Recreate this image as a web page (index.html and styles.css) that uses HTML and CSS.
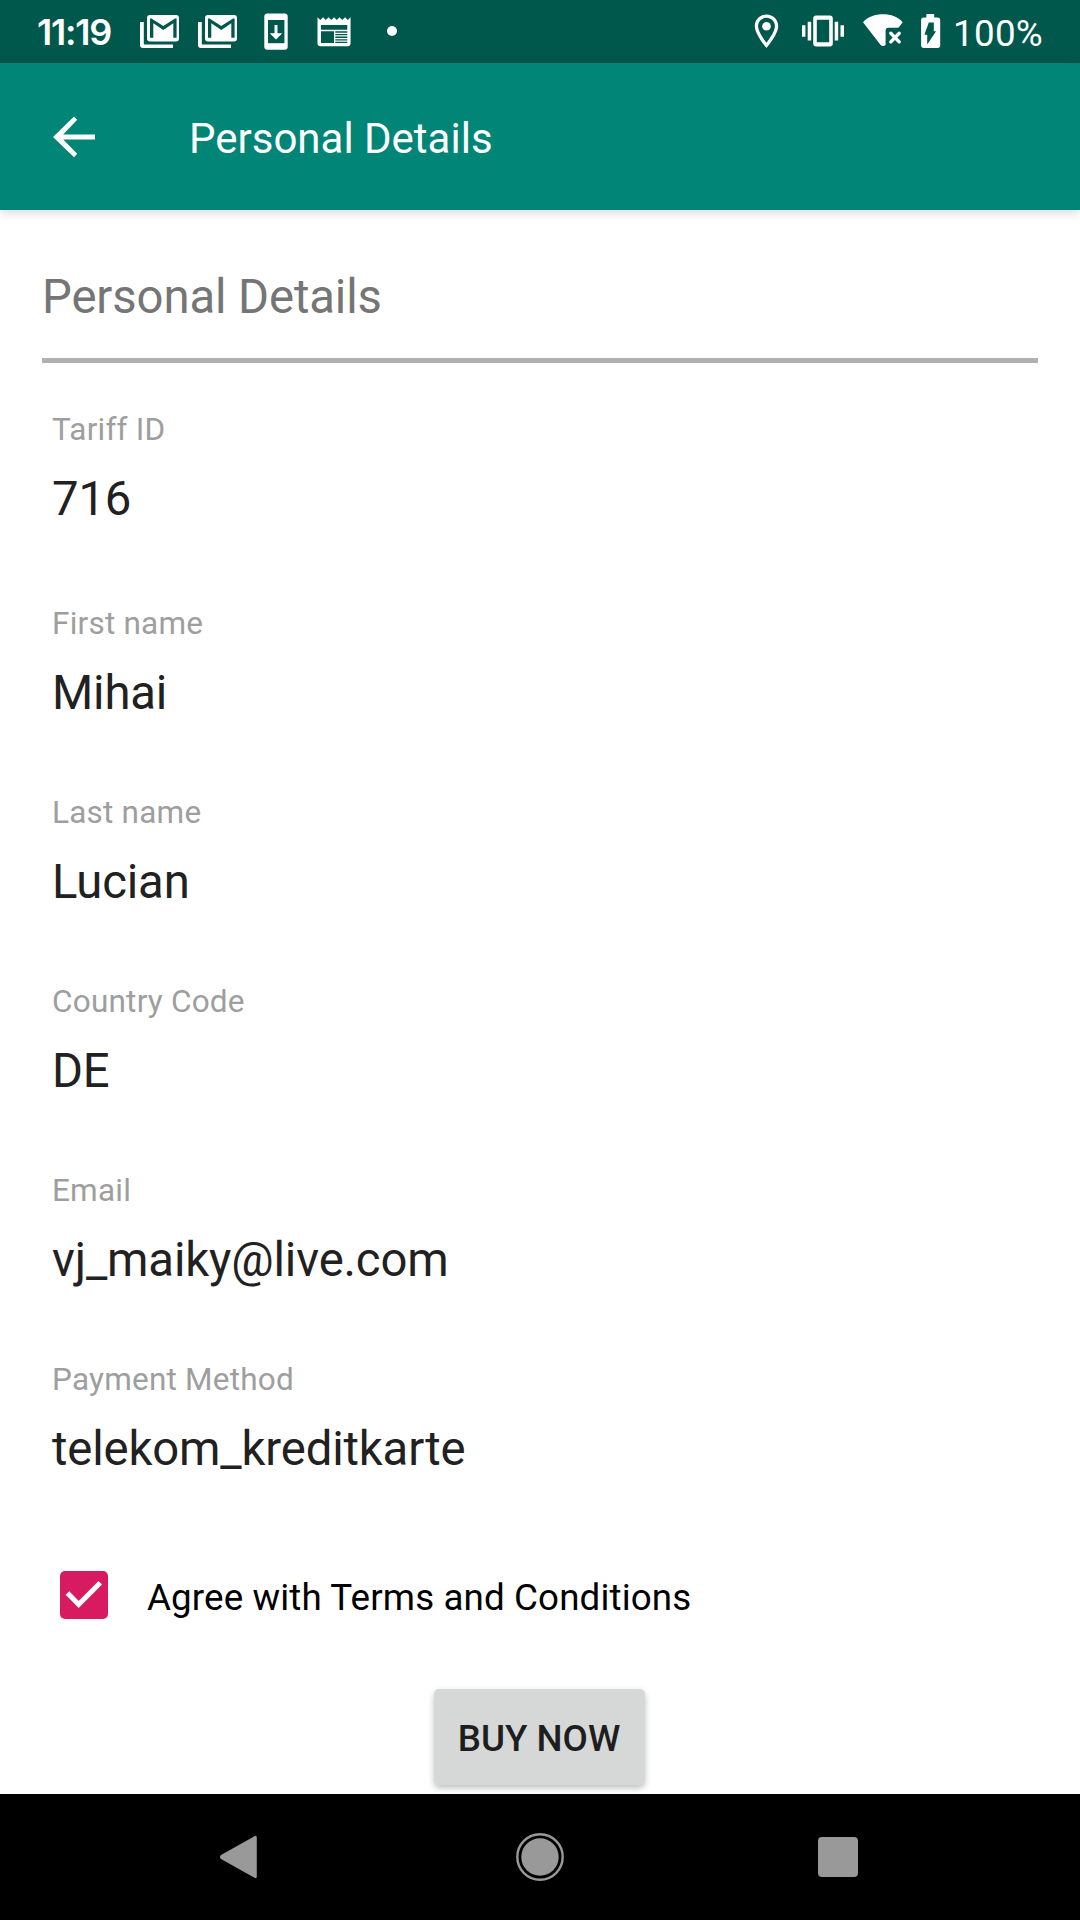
FILE: index.html
```html
<!DOCTYPE html>
<html lang="en">
<head>
<meta charset="utf-8">
<title>Personal Details</title>
<link rel="stylesheet" href="styles.css">
</head>
<body>
<div class="screen">
  <div class="status-bar">
    <span class="clock">11:19</span>
    <div class="notifications">
      <svg class="slot" viewBox="0 0 58 63"><path class="ink" d="M9 22h3.8v22.4h29.2V48H12q-3 0-3-3z"/><rect class="ink" x="16" y="15" width="32" height="26.6" rx="3"/><path class="cut" d="M19 37.7V18.5h1.5L32.3 26 44.1 18.5h1.5v19.2h-3.3V23.3l-10 6.7-10-6.7v14.4z"/></svg>
      <svg class="slot" viewBox="0 0 58 63"><path class="ink" d="M9 22h3.8v22.4h29.2V48H12q-3 0-3-3z"/><rect class="ink" x="16" y="15" width="32" height="26.6" rx="3"/><path class="cut" d="M19 37.7V18.5h1.5L32.3 26 44.1 18.5h1.5v19.2h-3.3V23.3l-10 6.7-10-6.7v14.4z"/></svg>
      <svg class="slot" viewBox="0 0 58 63"><rect class="ink" x="17.3" y="13.5" width="23.4" height="36.2" rx="3"/><path class="cut" d="M21 20h16.4v23.2H21z"/><path class="ink" d="M27.5 25h3v8.3h4.8L29 39.5l-6.300-6.200h4.800z"/></svg>
      <svg class="slot" viewBox="0 0 58 63"><path class="ink" d="M12.500 17.300l2.800 2.600 2.750-2.600 2.750 2.600 2.750-2.600 2.750 2.600 2.750-2.600 2.750 2.600 2.750-2.600 2.750 2.600 2.750-2.600 2.750 2.600 2.750-2.600V43.300q0 3-3 3H15.500q-3 0-3-3z"/><path class="cut" d="M16 25h26.300v4.800H16zM16 31.300h13v11.700H16zM30.300 31.300h12v1.400h-12zM30.300 34h12v1.300h-12zM30.300 36.600h12v1.300h-12zM30.300 39.200h12v1.300h-12zM30.300 41.800h12v1.200h-12z"/></svg>
      <svg class="slot" viewBox="0 0 58 63"><circle class="ink" cx="29" cy="31" r="5"/></svg>
    </div>
    <div class="system">
      <svg class="location" viewBox="744 0 46 63"><path class="ink" fill-rule="evenodd" d="M766.500 14.500c-6.500 0-11.700 5.100-11.700 11.600 0 8.700 11.700 21.900 11.700 21.900s11.700-13.200 11.700-21.900c0-6.500-5.200-11.600-11.700-11.600zm0 3.300c4.700 0 8.400 3.700 8.400 8.300 0 4.900-4.800 12-8.400 16.600-3.600-4.600-8.400-11.700-8.400-16.600 0-4.600 3.700-8.300 8.400-8.300z"/><circle class="ink" cx="766.500" cy="26.200" r="4.300"/></svg>
      <svg class="vibrate" viewBox="790 0 66 63"><path class="ink" d="M802 25.200h3.400v11.600H802zM807.700 21.700h3.500v18.700h-3.500zM834.700 21.700h3.500v18.700h-3.500zM840.500 25.200h3.500v11.600h-3.500z"/><path class="ink" fill-rule="evenodd" d="M816.200 15.500h13.600q3 0 3 3v25q0 3-3 3h-13.600q-3 0-3-3v-25q0-3 3-3zm.6 4.300v22.400h12.400V19.800z"/></svg>
      <svg class="wifi" viewBox="856 0 54 63"><path class="ink" d="M863 22.200C868 16.700 875 14.300 883 14.300s15 2.600 19.700 7.900l-3.400 4.500q-.7 1-2 1h-8.700q-3 0-3 3v14.400q-3 2.200-5.200-.4z"/><path class="mark" d="M890.800 33.200l8.400 8.700m0-8.700l-8.400 8.700"/></svg>
      <svg class="battery" viewBox="910 0 40 63"><path class="ink" d="M926.400 14h7.800v3.500h3.300q2.700 0 2.700 2.700v25q0 2.700-2.700 2.700h-13.700q-2.700 0-2.700-2.700v-25q0-2.700 2.700-2.700h2.600z"/><path class="cut" d="M933.800 22.500v8.800h2.300L927.200 44.500v-9.800h-2.800l4.400-12.200z"/></svg>
      <span class="level">100%</span>
    </div>
  </div>

  <header class="app-bar">
    <svg class="back" viewBox="0 0 42 42"><path d="M42 18.600v5H10.200l14 14.200L21 41.300 0 21 21 .6l3.200 3.200-14 14.800z"/></svg>
    <h1 class="title">Personal Details</h1>
  </header>

  <main class="content">
    <h2 class="section">Personal Details</h2>
    <dl class="fields">
      <div class="field field-lead"><dt>Tariff ID</dt><dd>716</dd></div>
      <div class="field"><dt>First name</dt><dd>Mihai</dd></div>
      <div class="field"><dt>Last name</dt><dd>Lucian</dd></div>
      <div class="field"><dt>Country Code</dt><dd>DE</dd></div>
      <div class="field"><dt>Email</dt><dd>vj_maiky@live.com</dd></div>
      <div class="field"><dt>Payment Method</dt><dd>telekom_kreditkarte</dd></div>
    </dl>
    <div class="agree">
      <svg class="check" viewBox="0 0 48 48"><rect class="box" width="48" height="48" rx="5"/><path class="tick" d="M7.500 22L18.700 33.500 40.300 11.800"/></svg>
      <span class="agree-text">Agree with Terms and Conditions</span>
    </div>
    <button class="buy">BUY NOW</button>
  </main>

  <nav class="nav-bar">
    <svg class="key" viewBox="0 0 52 52"><path d="M35.500 5.200q2.300-1.200 2.300 1.600v38.400q0 2.800-2.300 1.600L2 28q-2-2 0-4z"/></svg>
    <svg class="key" viewBox="0 0 52 52"><circle class="ring" cx="26" cy="26" r="22.700"/><circle cx="26" cy="26" r="18.700"/></svg>
    <svg class="key" viewBox="0 0 52 52"><rect x="8" y="6" width="40" height="40" rx="4"/></svg>
  </nav>
</div>
</body>
</html>
```
FILE: styles.css
```css
* { box-sizing: border-box; }

body {
  margin: 0;
  font-family: Roboto, "Noto Sans", sans-serif;
  background: #fff;
}

h1, h2, dl, dt, dd { margin: 0; font-weight: 400; }
svg { display: block; flex: none; }

.screen {
  display: flex;
  flex-direction: column;
  width: 1080px;
  height: 1920px;
  overflow: hidden;
}

.status-bar {
  display: flex;
  flex: none;
  height: 63px;
  color: #fff;
  background: #00574b;
}
.ink { fill: #fff; }
.cut { fill: #00574b; }
.mark { fill: none; stroke: #fff; stroke-width: 3.4; stroke-linecap: round; }

.clock {
  width: 131px;
  padding-left: 37px;
  font: 600 36px/64px Inter, sans-serif;
  letter-spacing: -1.2px;
}
.notifications { display: flex; }
.slot { width: 58px; height: 63px; }
.system { display: flex; margin-left: auto; width: 336px; }
.location { width: 46px; height: 63px; }
.vibrate { width: 66px; height: 63px; }
.wifi { width: 54px; height: 63px; }
.battery { width: 40px; height: 63px; }
.level { padding-left: 3px; font-size: 36.75px; line-height: 67px; letter-spacing: 0.3px; }

.app-bar {
  display: flex;
  flex: none;
  align-items: center;
  height: 147px;
  padding-left: 53px;
  color: #fff;
  background: #008577;
  box-shadow: 0 3px 10px rgba(0, 0, 0, 0.15);
}
.back { width: 42px; height: 42px; fill: #fff; }
.title {
  padding: 4px 0 0 94px;
  font-size: 42px;
  line-height: 50px;
}

.content {
  display: flex;
  flex: none;
  flex-direction: column;
  height: 1584px;
  padding: 60px 42px 0;
}
.section {
  height: 93px;
  border-bottom: 5px solid #b0b0b0;
  color: #757575;
  font-size: 47.25px;
  line-height: 55px;
  letter-spacing: -0.1px;
}
.fields {
  display: flex;
  flex-direction: column;
  gap: 73px;
  padding: 48px 10px 0;
}
.field { display: flex; flex-direction: column; gap: 24px; }
.field-lead { padding-bottom: 5px; }
.field dt { color: #9e9e9e; font-size: 31.5px; line-height: 37px; letter-spacing: 0.22px; }
.field dd { color: #212121; font-size: 47.25px; line-height: 55px; letter-spacing: -0.15px; }

.agree {
  display: flex;
  align-items: center;
  gap: 39px;
  height: 48px;
  margin-top: 94px;
  padding-left: 18px;
}
.check { width: 48px; height: 48px; }
.box { fill: #d81b60; }
.tick { fill: none; stroke: #fff; stroke-width: 5; }
.agree-text {
  padding-top: 5px;
  color: #000;
  font-size: 36.75px;
  line-height: 43px;
  letter-spacing: 0.12px;
}

.buy {
  align-self: center;
  width: 211px;
  height: 96px;
  margin: 70px 1px 0 0;
  padding: 2px 1px 0 0;
  border: 0;
  border-radius: 5px;
  color: #1e1e1e;
  background: #d6d8d7;
  box-shadow: 0 3px 6px rgba(0, 0, 0, 0.25);
  font: 500 36.75px/43px Roboto, sans-serif;
}

.nav-bar {
  position: relative;
  display: flex;
  flex: none;
  align-items: center;
  justify-content: space-between;
  height: 126px;
  padding: 0 218px;
  background: #000;
}
.key { width: 52px; height: 52px; fill: #999; }
.key:first-child { margin-left: 1px; margin-right: -1px; }
.ring { fill: none; stroke: #999; stroke-width: 2.4; }
```
